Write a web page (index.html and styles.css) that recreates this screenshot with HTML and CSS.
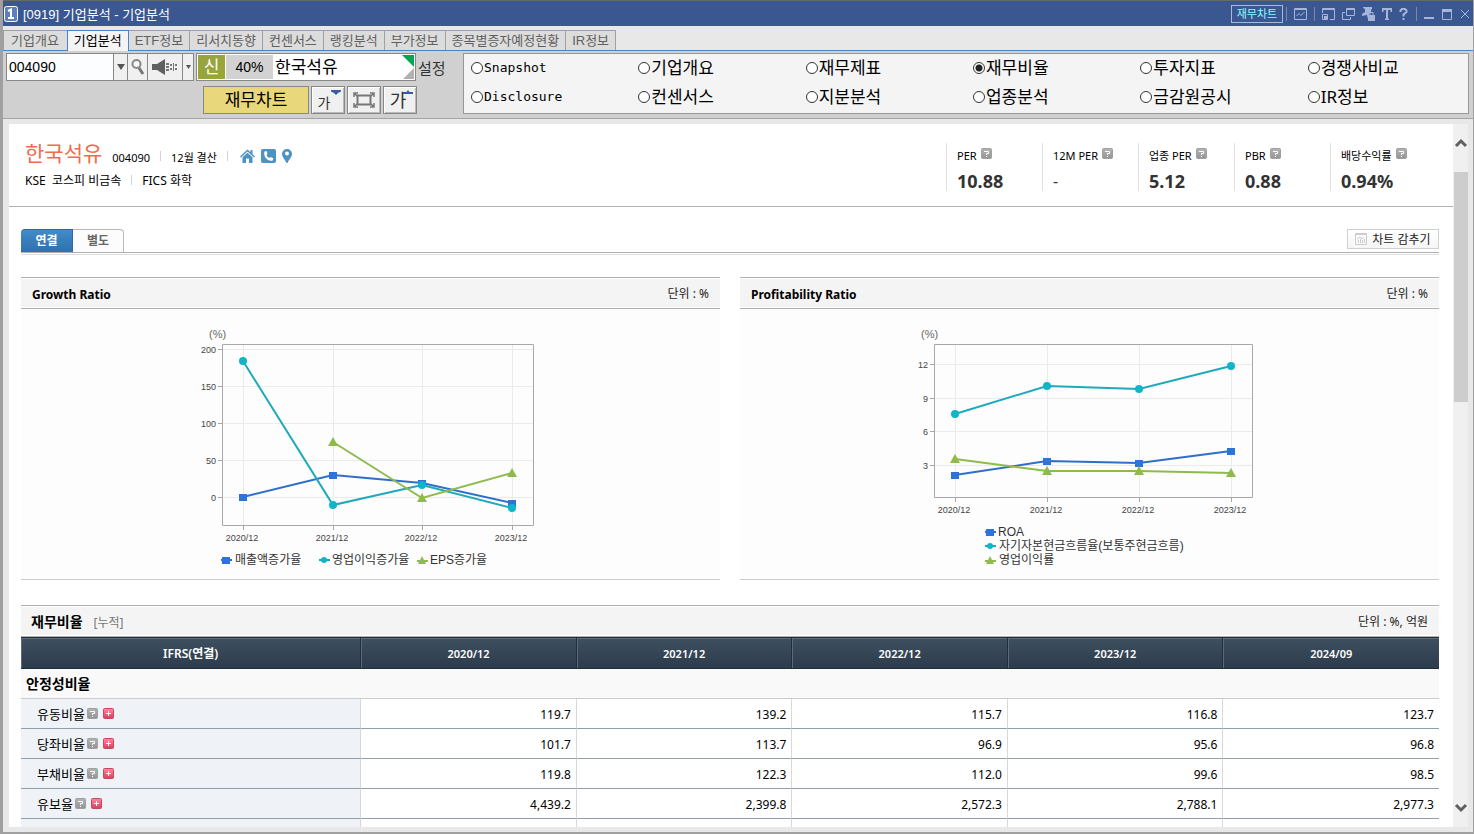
FILE: index.html
```html
<!DOCTYPE html>
<html lang="ko">
<head>
<meta charset="utf-8">
<title>[0919] 기업분석</title>
<link rel="stylesheet" href="styles.css">
</head>
<body>
<svg class="defs" width="0" height="0" aria-hidden="true">
  <defs>
    <linearGradient id="grayGrad" x1="0" y1="0" x2="0" y2="1"><stop offset="0" stop-color="#b4b4b4"/><stop offset="1" stop-color="#949494"/></linearGradient>
    <linearGradient id="redGrad" x1="0" y1="0" x2="0" y2="1"><stop offset="0" stop-color="#ff8a9e"/><stop offset="1" stop-color="#dc3c5c"/></linearGradient>
    <symbol id="help" viewBox="0 0 11 11"><rect x="0.5" y="0.5" width="10" height="10" rx="1" fill="url(#grayGrad)" stroke="#a0a0a0"/><path d="M3 3.500H7.500V5.500H5.500V7M5.500 8V9" fill="none" stroke="#fff"/></symbol>
    <symbol id="plus" viewBox="0 0 11 11"><rect x="0.5" y="0.5" width="10" height="10" rx="1" fill="url(#redGrad)" stroke="#c84860"/><path d="M3 5.5H8M5.5 3V8" stroke="#fff"/></symbol>
    <g id="mSq"><rect x="-4" y="-3" width="8" height="7" fill="#2d74da"/></g>
    <g id="mDot"><circle r="4" fill="#0fb5c9"/></g>
    <g id="mTri"><path d="M0-5L5 4H-5Z" fill="#8fba4c"/></g>
    <g id="lSq"><path d="M-5 0H6" stroke="#2d6fca" stroke-width="2"/><rect x="-4" y="-3" width="8" height="7" fill="#2d74da"/></g>
    <g id="lDot"><path d="M-5 0H6" stroke="#1eaaba" stroke-width="2"/><circle r="3" fill="#0fb5c9"/></g>
    <g id="lTri"><path d="M-5 1H6" stroke="#8fba4c" stroke-width="2"/><path d="M0-4L4 4H-4Z" fill="#8fba4c"/></g>
  </defs>
</svg>

<div class="window">
  <header class="titlebar">
    <svg class="badge" viewBox="0 0 14 16"><rect x="0.5" y="0.5" width="13" height="15" rx="2" fill="#5f7ebc" stroke="#fff"/><path d="M4 5L7 3.5V12M4 12H10" fill="none" stroke="#fff" stroke-width="2"/></svg>
    <h1 class="title">[0919] 기업분석 - 기업분석</h1>
    <div class="titletools">
      <div class="quick"><button class="quickbtn">재무차트</button><i class="sep"></i></div>
      <button class="ti" aria-label="차트"><svg width="13" height="12" viewBox="0 0 13 12"><path d="M.5 .5H12.5V11.5H.5ZM.5 1.5H12.5"/><path d="M2.5 8L5 5.5L7 7.5L10.5 4"/></svg></button>
      <i class="sep"></i>
      <button class="ti" aria-label="크기"><svg width="13" height="12" viewBox="0 0 13 12"><path d="M.5 5V.5H12.5V11.5H8M.5 1.5H12.5M.5 6.5H5.5V11.5H.5Z"/><path class="f" d="M2 8H5V11H2Z"/></svg></button>
      <button class="ti" aria-label="복제"><svg width="13" height="12" viewBox="0 0 13 12"><path d="M4.5 .5H12.5V7.5H4.5ZM4.5 1.5H12.5M3 4.5H.5V11.5H8.5V9"/></svg></button>
      <button class="ti" aria-label="고정"><svg width="13" height="14" viewBox="0 0 13 14"><path class="f" d="M1 0H10V2L9 3V5L7 7L6 12L5 8L0 9V7L3 5V2L1 1ZM6 8H13V14H6Z"/><path d="M8 8V5.5H11V8"/></svg></button>
      <button class="ti" aria-label="글꼴"><svg width="10" height="12" viewBox="0 0 10 12"><path d="M0 1H10M5 1V11M.5 0V4M9.5 0V4M3 11.5H7" stroke-width="2"/></svg></button>
      <button class="ti" aria-label="도움말"><svg width="10" height="12" viewBox="0 0 10 12"><path d="M1.5 4V2.5L3 1H6L7.5 2.5V4L4.5 6.5V8.5M4.5 10V12" stroke-width="2"/></svg></button>
      <i class="sep"></i>
      <button class="ti" aria-label="최소화"><svg width="10" height="12" viewBox="0 0 10 12"><path d="M0 10H10" stroke-width="2"/></svg></button>
      <button class="ti" aria-label="최대화"><svg width="12" height="12" viewBox="0 0 12 12"><path d="M1.5 2V11.5H10.5V2"/><path d="M1 2.5H11" stroke-width="3"/></svg></button>
      <button class="ti" aria-label="닫기"><svg width="10" height="12" viewBox="0 0 10 12"><path d="M1 2L9 10M9 2L1 10"/></svg></button>
    </div>
  </header>

  <nav class="tabs">
    <a href="#" class="tab">기업개요</a><a href="#" class="tab on">기업분석</a><a href="#" class="tab">ETF정보</a><a href="#" class="tab">리서치동향</a><a href="#" class="tab">컨센서스</a><a href="#" class="tab">랭킹분석</a><a href="#" class="tab">부가정보</a><a href="#" class="tab">종목별증자예정현황</a><a href="#" class="tab">IR정보</a>
  </nav>

  <section class="toolbar">
    <div class="tools">
      <div class="toolrow">
        <div class="combo">
          <input class="code" value="004090" aria-label="종목코드">
          <button class="cell drop" aria-label="목록"><svg width="8" height="6" viewBox="0 0 8 6"><path d="M0 0H8L4 6Z" fill="#555"/></svg></button>
          <button class="cell find" aria-label="검색"><svg width="14" height="18" viewBox="0 0 14 18"><circle cx="5.5" cy="6" r="4" fill="#f8f8f8" stroke="#888" stroke-width="2"/><path d="M8 10L12 16" stroke="#777" stroke-width="3"/></svg></button>
          <button class="cell sound" aria-label="소리"><svg width="26" height="16" viewBox="0 0 26 16"><path d="M0 5H5L13 0V16L5 11H0Z" fill="#606060"/><path d="M14 4H17V6H14ZM14 7H17V9H14ZM14 10H17V12H14ZM18 5H20V7H18ZM18 9H20V11H18ZM21 4H22V12H21ZM23 5H25V7H23ZM23 9H25V11H23Z" fill="#777"/></svg></button>
          <button class="cell mini" aria-label="소리 옵션"><svg width="5" height="4" viewBox="0 0 5 4"><path d="M0 0H5L2.5 4Z" fill="#555"/></svg></button>
        </div>
        <div class="stock">
          <span class="credit">신</span><span class="rate">40%</span><span class="stockname">한국석유</span>
          <svg class="corner" viewBox="0 0 12 24"><path d="M0 0H12V12Z" fill="#00a850"/><path d="M12 13V24H1Z" fill="#b4b0b0"/></svg>
        </div>
        <a href="#" class="setting">설정</a>
      </div>
      <div class="toolrow second">
        <button class="yellow">재무차트</button>
        <button class="sizebtn" aria-label="글자 작게"><span class="ga small">가</span><svg class="mark" viewBox="0 0 10 5"><path d="M0 0H10V1.500L7 3L5 5L3 3L0 1.500Z" fill="#3a5aa4"/></svg></button>
        <button class="sizebtn" aria-label="화면 맞춤"><svg width="22" height="16" viewBox="0 0 22 16" fill="none" stroke="#777"><rect x="4.500" y="3.500" width="13" height="9" stroke-width="2"/><path d="M1 5V1H5M1 1L4 4M17 1H21V5M21 1L18 4M1 11V15H5M1 15L4 12M17 15H21V11M21 15L18 12" stroke-width="1.500"/></svg></button>
        <button class="sizebtn" aria-label="글자 크게"><span class="ga">가</span><svg class="mark" viewBox="0 0 10 5"><path d="M5 0L6.500 2H10V4H0V2H3.500Z" fill="#3a5aa4"/></svg></button>
      </div>
    </div>
    <form class="radios">
      <label class="opt latin"><input type="radio" name="v">Snapshot</label>
      <label class="opt"><input type="radio" name="v">기업개요</label>
      <label class="opt"><input type="radio" name="v">재무제표</label>
      <label class="opt"><input type="radio" name="v" checked>재무비율</label>
      <label class="opt"><input type="radio" name="v">투자지표</label>
      <label class="opt"><input type="radio" name="v">경쟁사비교</label>
      <label class="opt latin"><input type="radio" name="v">Disclosure</label>
      <label class="opt"><input type="radio" name="v">컨센서스</label>
      <label class="opt"><input type="radio" name="v">지분분석</label>
      <label class="opt"><input type="radio" name="v">업종분석</label>
      <label class="opt"><input type="radio" name="v">금감원공시</label>
      <label class="opt"><input type="radio" name="v">IR정보</label>
    </form>
  </section>

  <div class="viewport">
    <main class="page">
      <section class="summary">
        <div class="ident">
          <div class="line1">
            <h2 class="corp">한국석유</h2><span class="ticker">004090</span><i class="bar"></i><span>12월 결산</span><i class="bar"></i>
            <a href="#" class="ic" aria-label="홈페이지"><svg width="15" height="14" viewBox="0 0 15 14"><path d="M0 7.500L7.500 0.500L10.500 3.300V1H12.500V5.200L15 7.500L14 8.500L7.500 2.500L1 8.500Z" fill="#4c92c2"/><path d="M2.500 8.300L7.500 3.700L12.500 8.300V14H9V9.500H6V14H2.500Z" fill="#4c92c2"/></svg></a>
            <a href="#" class="ic" aria-label="전화"><svg width="15" height="14" viewBox="0 0 15 14"><rect width="15" height="14" rx="2" fill="#4c92c2"/><path d="M3.500 2.500L5.500 2L6.500 5L5.500 6C6 7.300 7.200 8.400 8.500 9L9.500 8L12.300 9.300L11.700 11.500C7 13 2 8 3.500 2.500Z" fill="#fff"/></svg></a>
            <a href="#" class="ic" aria-label="위치"><svg width="10" height="14" viewBox="0 0 10 14"><path d="M5 0A5 5 0 0 1 10 5C10 8 6.500 11 5.500 14H4.500C3.500 11 0 8 0 5A5 5 0 0 1 5 0Z" fill="#4c92c2"/><circle cx="5" cy="4.500" r="2" fill="#fff"/></svg></a>
          </div>
          <div class="line2"><span>KSE&nbsp; 코스피 비금속</span><i class="bar"></i><span>FICS 화학</span></div>
        </div>
        <dl class="stats">
          <div class="stat"><dt>PER <svg class="q"><use href="#help"/></svg></dt><dd>10.88</dd></div>
          <div class="stat"><dt>12M PER <svg class="q"><use href="#help"/></svg></dt><dd class="none">-</dd></div>
          <div class="stat"><dt>업종 PER <svg class="q"><use href="#help"/></svg></dt><dd>5.12</dd></div>
          <div class="stat"><dt>PBR <svg class="q"><use href="#help"/></svg></dt><dd>0.88</dd></div>
          <div class="stat"><dt>배당수익률 <svg class="q"><use href="#help"/></svg></dt><dd>0.94%</dd></div>
        </dl>
      </section>

      <div class="body">
        <div class="subbar">
          <div class="subtabs"><button class="sub on">연결</button><button class="sub">별도</button></div>
          <button class="hide"><svg width="12" height="12" viewBox="0 0 12 12" fill="none" stroke="#ccc"><path d="M.5 .5H11.500V11.500H.5ZM.5 1.500H11.500M3.500 10V7M5.500 10V6M7.500 10V7M9.500 10V6M2 6L5 4L7 6L9 4"/></svg>차트 감추기</button>
        </div>

        <div class="charts">
          <article class="panel">
            <header class="phead"><h3>Growth Ratio</h3><span>단위 : %</span></header>
            <div class="plot">
              <svg width="419" height="270" viewBox="0 0 419 270">
                <path class="grid" d="M61 40.500H372M61 77.500H372M61 114.500H372M61 151.500H372M61 188.500H372M82.500 36V216M172.500 36V216M261.500 36V216M351.500 36V216"/>
                <path class="frame" d="M61.500 35.500H372.500V216.500H61.500ZM57 40.500H61M57 77.500H61M57 114.500H61M57 151.500H61M57 188.500H61M82.500 217V221M172.500 217V221M261.500 217V221M351.500 217V221"/>
                <g class="tick end"><text x="55" y="44">200</text><text x="55" y="81">150</text><text x="55" y="118">100</text><text x="55" y="155">50</text><text x="55" y="192">0</text></g>
                <g class="tick mid"><text x="81" y="232">2020/12</text><text x="171" y="232">2021/12</text><text x="260" y="232">2022/12</text><text x="350" y="232">2023/12</text></g>
                <text class="unit" x="48" y="29">(%)</text>
                <polyline class="s1" points="82,188 172,166 261,174 351,194"/><use href="#mSq" x="82" y="188"/><use href="#mSq" x="172" y="166"/><use href="#mSq" x="261" y="174"/><use href="#mSq" x="351" y="194"/>
                <polyline class="s2" points="82,52 172,196 261,176 351,199"/><use href="#mDot" x="82" y="52"/><use href="#mDot" x="172" y="196"/><use href="#mDot" x="261" y="176"/><use href="#mDot" x="351" y="199"/>
                <polyline class="s3" points="172,133 261,189 351,164"/><use href="#mTri" x="172" y="133"/><use href="#mTri" x="261" y="189"/><use href="#mTri" x="351" y="164"/>
                <g class="leg"><use href="#lSq" x="65" y="251"/><text x="74" y="255">매출액증가율</text><use href="#lDot" x="163" y="251"/><text x="171" y="255">영업이익증가율</text><use href="#lTri" x="261" y="251"/><text x="269" y="255">EPS증가율</text></g>
              </svg>
            </div>
          </article>
          <article class="panel">
            <header class="phead"><h3>Profitability Ratio</h3><span>단위 : %</span></header>
            <div class="plot">
              <svg width="419" height="270" viewBox="0 0 419 270">
                <path class="grid" d="M54 55.500H372M54 89.500H372M54 122.500H372M54 156.500H372M75.500 36V188M167.500 36V188M259.500 36V188M351.500 36V188"/>
                <path class="frame" d="M54.500 35.500H372.500V188.500H54.500ZM50 55.500H54M50 89.500H54M50 122.500H54M50 156.500H54M75.500 189V193M167.500 189V193M259.500 189V193M351.500 189V193"/>
                <g class="tick end"><text x="48" y="59">12</text><text x="48" y="93">9</text><text x="48" y="126">6</text><text x="48" y="160">3</text></g>
                <g class="tick mid"><text x="74" y="204">2020/12</text><text x="166" y="204">2021/12</text><text x="258" y="204">2022/12</text><text x="350" y="204">2023/12</text></g>
                <text class="unit" x="41" y="29">(%)</text>
                <polyline class="s1" points="75,166 167,152 259,154 351,142"/><use href="#mSq" x="75" y="166"/><use href="#mSq" x="167" y="152"/><use href="#mSq" x="259" y="154"/><use href="#mSq" x="351" y="142"/>
                <polyline class="s2" points="75,105 167,77 259,80 351,57"/><use href="#mDot" x="75" y="105"/><use href="#mDot" x="167" y="77"/><use href="#mDot" x="259" y="80"/><use href="#mDot" x="351" y="57"/>
                <polyline class="s3" points="75,150 167,162 259,162 351,164"/><use href="#mTri" x="75" y="150"/><use href="#mTri" x="167" y="162"/><use href="#mTri" x="259" y="162"/><use href="#mTri" x="351" y="164"/>
                <g class="leg"><use href="#lSq" x="110" y="223"/><text x="118" y="227">ROA</text><use href="#lDot" x="110" y="237"/><text x="119" y="241">자기자본현금흐름율(보통주현금흐름)</text><use href="#lTri" x="110" y="251"/><text x="119" y="255">영업이익률</text></g>
              </svg>
            </div>
          </article>
        </div>

        <section class="ratios">
          <header class="phead"><h3>재무비율<small>[누적]</small></h3><span>단위 : %, 억원</span></header>
          <table>
            <thead><tr><th class="first">IFRS(연결)</th><th>2020/12</th><th>2021/12</th><th>2022/12</th><th>2023/12</th><th>2024/09</th></tr></thead>
            <tbody>
              <tr class="cat"><th colspan="6">안정성비율</th></tr>
              <tr><th>유동비율<svg class="q"><use href="#help"/></svg><button class="exp" aria-label="펼치기"><svg class="q"><use href="#plus"/></svg></button></th><td>119.7</td><td>139.2</td><td>115.7</td><td>116.8</td><td>123.7</td></tr>
              <tr><th>당좌비율<svg class="q"><use href="#help"/></svg><button class="exp" aria-label="펼치기"><svg class="q"><use href="#plus"/></svg></button></th><td>101.7</td><td>113.7</td><td>96.9</td><td>95.6</td><td>96.8</td></tr>
              <tr><th>부채비율<svg class="q"><use href="#help"/></svg><button class="exp" aria-label="펼치기"><svg class="q"><use href="#plus"/></svg></button></th><td>119.8</td><td>122.3</td><td>112.0</td><td>99.6</td><td>98.5</td></tr>
              <tr><th>유보율<svg class="q"><use href="#help"/></svg><button class="exp" aria-label="펼치기"><svg class="q"><use href="#plus"/></svg></button></th><td>4,439.2</td><td>2,399.8</td><td>2,572.3</td><td>2,788.1</td><td>2,977.3</td></tr>
              <tr><th></th><td></td><td></td><td></td><td></td><td></td></tr>
            </tbody>
          </table>
        </section>
      </div>
    </main>
    <aside class="scroll">
      <button class="arrow" aria-label="위로"><svg width="14" height="10" viewBox="0 0 14 10"><path d="M2 8L7 3L12 8" fill="none" stroke="#606060" stroke-width="3"/></svg></button>
      <div class="track"><div class="thumb"></div></div>
      <button class="arrow" aria-label="아래로"><svg width="14" height="10" viewBox="0 0 14 10"><path d="M2 2L7 7L12 2" fill="none" stroke="#606060" stroke-width="3"/></svg></button>
    </aside>
  </div>
</div>
</body>
</html>
```

FILE: styles.css
```css
* { box-sizing: border-box; }
body { margin: 0; font-family: "Noto Sans", "Noto Sans CJK KR", sans-serif; font-size: 12px; color: #000; }
h1, h2, h3, dl, dd { margin: 0; font-weight: normal; }
a { color: inherit; text-decoration: none; }
button { padding: 0; border: 0; background: none; color: inherit; font: inherit; }
svg { display: block; flex: none; }
.defs { position: absolute; }

.window { height: 100vh; display: flex; flex-direction: column; background: #e8e8e8; border: solid #a0a0a0; border-width: 0 1px 2px 3px; overflow: hidden; }

/* title bar */
.titlebar { display: flex; align-items: center; height: 26px; margin-left: -3px; margin-right: -1px; padding: 0 4px; background: #3a5792; border-top: 1px solid #686868; flex: none; }
.badge { width: 14px; height: 16px; }
.title { margin-left: 5px; color: #fff; font: 13px "Liberation Sans", "Noto Sans CJK KR", sans-serif; }
.titletools { margin-left: auto; display: flex; align-items: center; gap: 7px; }
.quick { display: flex; align-items: center; gap: 3px; }
.quickbtn { width: 52px; height: 18px; border: 1px solid #a8bad8; color: #8ffcff; font-size: 11px; line-height: 14px; }
.sep { width: 1px; height: 14px; background: #8088a0; }
.ti svg { fill: none; stroke: #a6b6da; }
.ti .f { fill: #a6b6da; stroke: none; }

/* screen tabs */
.tabs { display: flex; height: 25px; padding: 4px 0 0; border-bottom: 1px solid #4a84c8; flex: none; font: 13px "Liberation Sans", "Noto Sans CJK KR", sans-serif; }
.tab { height: 20px; padding: 0 6px; line-height: 20px; white-space: nowrap; color: #606060; background: #dcdcdc; border: solid #a0a0a0; border-width: 1px 0 0 1px; }
.tab:first-child { padding: 0 8px 0 7px; }
.tab:last-child { border-right-width: 1px; }
.tab.on { height: 21px; color: #000; background: #f4f4f4; border: solid #4a84c8; border-width: 1px 1px 0; }
.tab.on + .tab { border-left: 0; }

/* tool bar */
.toolbar { display: flex; gap: 17px; height: 68px; padding: 2px 4px 4px 3px; background: #d0d0d0; border-bottom: 1px solid #a4a4a4; flex: none; }
.tools { width: 440px; flex: none; display: flex; flex-direction: column; gap: 5px; }
.toolrow { display: flex; height: 28px; align-items: stretch; }
.combo { display: flex; width: 188px; border: 1px solid #888; background: #888; gap: 1px; margin-right: 2px; }
.code { flex: 1; min-width: 0; border: 0; padding: 0 2px; font: 14px "Liberation Sans", sans-serif; background: #fcfdff; }
.cell { display: flex; align-items: center; justify-content: center; background: #f0f0f0; }
.drop { width: 13px; }
.find { width: 19px; }
.sound { width: 34px; }
.mini { width: 10px; }
.stock { position: relative; display: flex; align-items: stretch; width: 220px; padding: 1px; gap: 1px; background: #fff; border: 1px solid #888; line-height: 24px; font-size: 17px; }
.credit { width: 27px; background: #98a53c; color: #fff; text-align: center; }
.rate { width: 47px; background: #d2d2d2; text-align: center; font-family: "Liberation Sans", sans-serif; font-size: 14px; }
.stockname { padding-left: 1px; }
.corner { position: absolute; right: 1px; top: 1px; width: 12px; height: 24px; }
.setting { align-self: center; margin-left: 2px; font-size: 15px; color: #333; }
.second { padding-left: 197px; gap: 2px; }
.yellow { width: 106px; background: #e9d77c; border: 1px solid #888; font-size: 17px; line-height: 24px; }
.sizebtn { position: relative; width: 34px; display: flex; align-items: center; justify-content: center; background: #f0f0f0; border: 1px solid #888; box-shadow: inset 1px 1px #fff, inset -1px -1px #bbb; color: #333; }
.ga { font-size: 18px; line-height: 20px; padding-right: 4px; }
.small { font-size: 14px; padding: 6px 8px 0 0; }
.mark { position: absolute; right: 3px; top: 3px; width: 10px; height: 5px; }
.radios { flex: 1; margin: 0; display: grid; grid-template-columns: repeat(6, 1fr); grid-template-rows: 27px 31px; align-items: center; background: #f4f4f4; border: 1px solid #989898; }
.opt { display: flex; align-items: center; gap: 1px; padding-left: 7px; font-size: 17px; line-height: 20px; white-space: nowrap; }
.latin { font-family: "DejaVu Sans Mono", monospace; font-size: 13px; }
.opt input { appearance: none; width: 12px; height: 12px; margin: 0; border: 1px solid #333; border-radius: 50%; background: #fff; }
.opt input:checked { background: radial-gradient(circle, #222 0 3px, #fff 4px); }

/* scrolled page */
.viewport { flex: 1; min-height: 0; display: flex; padding: 5px 5px 5px 6px; }
.page { flex: 1; min-width: 0; background: #fff; overflow: hidden; }
.scroll { width: 15px; display: flex; flex-direction: column; background: #f0f0f0; padding-left: 1px; }
.arrow { height: 38px; display: flex; align-items: center; justify-content: center; }
.track { flex: 1; padding-top: 10px; }
.thumb { height: 230px; background: #cdcdcd; }

.summary { display: flex; justify-content: space-between; height: 83px; padding: 19px 27px 0 16px; border-bottom: 1px solid #b0b0b0; font-size: 11px; }
.line1, .line2 { display: flex; align-items: center; }
.line1 { height: 26px; }
.line2 { height: 22px; font-size: 12px; }
.corp { font-size: 21px; line-height: 24px; color: #f26a4c; align-self: flex-start; margin-top: -2px; }
.ticker { margin-left: 10px; }
.line1 > span { padding-top: 2px; }
.bar { width: 1px; height: 10px; margin: 0 10px; background: #ccd4dc; }
.ic { margin-right: 6px; }
.ic:first-of-type { margin-left: 2px; }
.stats { display: flex; height: 48px; }
.stat { width: 96px; padding-left: 10px; border-left: 1px solid #e0e0e0; }
.stat dt { display: flex; gap: 4px; line-height: 26px; white-space: nowrap; }
.stat .q { margin-top: 5px; }
.q { width: 11px; height: 11px; }
.stat dd { font-size: 18px; font-weight: bold; line-height: 24px; color: #333; }
.stat .none { font-size: 16px; font-weight: normal; }

.body { padding: 22px 14px 0 12px; }
.subbar { display: flex; justify-content: space-between; height: 26px; border-bottom: 1px solid #e0e0e0; background: linear-gradient(#b0b0b0, #b0b0b0) 0 23px / 100% 1px no-repeat; }
.subtabs { display: flex; height: 23px; }
.sub { width: 51px; border: 1px solid #b8b8b8; border-width: 1px 1px 0 0; border-radius: 0 4px 0 0; background: #fcfcfc; color: #666; font-weight: bold; line-height: 20px; }
.sub.on { width: 52px; border-color: #2a6aa8; border-radius: 4px 0 0 0; background: linear-gradient(#428bca, #3070ac); color: #fff; }
.hide { display: flex; align-items: center; justify-content: center; gap: 5px; width: 92px; height: 20px; border: 1px solid #d0d0d0; background: linear-gradient(#fff, #f6f6f6); font-size: 12px; color: #222; }

.charts { display: grid; grid-template-columns: 1fr 1fr; gap: 20px; margin-top: 22px; }
.panel { background: #fdfdfd; border-bottom: 1px solid #ccc; }
.phead { display: flex; justify-content: space-between; align-items: center; height: 32px; padding: 0 11px; background: #f4f4f4; border: solid #b0b0b0; border-width: 1px 0; box-shadow: inset 0 1px #fff, inset 0 -1px #fff; color: #222; }
.phead h3 { font-size: 12px; font-weight: bold; color: #000; }
.panel h3 { padding-top: 2px; }
.plot { display: flex; justify-content: center; }
.grid { stroke: #ebebeb; fill: none; }
.frame { stroke: #a8a8a8; fill: none; }
.s1, .s2, .s3 { fill: none; stroke-width: 2; }
.s1 { stroke: #2d6fca; }
.s2 { stroke: #1eaaba; }
.s3 { stroke: #8fba4c; }
.tick { font: 9px "Liberation Sans", sans-serif; fill: #444; }
.end { text-anchor: end; }
.mid { text-anchor: middle; }
.unit { font: 11px "Liberation Sans", sans-serif; fill: #666; }
.leg { font: 12px "Liberation Sans", "Noto Sans CJK KR", sans-serif; fill: #333; }

.ratios { margin-top: 25px; }
.ratios .phead { padding-left: 10px; }
.ratios h3 { font-size: 14px; }
.ratios small { margin-left: 11px; font-size: 12px; font-weight: normal; color: #777; }
table { width: 100%; table-layout: fixed; border-collapse: separate; border-spacing: 0; }
thead th { height: 32px; padding: 0; color: #fff; font-size: 11px; font-weight: 600; background: linear-gradient(#3e4f60, #2c3c4c); border: solid #222e3a; border-width: 1px 1px 1px 0; box-shadow: inset 1px 1px #5c6b7a; }
thead .first { width: 24%; font-size: 12px; }
thead th:last-child { border-right: 0; }
tbody th, tbody td { height: 30px; padding: 0; border-bottom: 1px solid #8ea0aa; }
tbody th { padding-left: 16px; text-align: left; font-size: 13px; font-weight: normal; line-height: 20px; background: #eff3f8; border-right: 1px solid #d4d8dc; }
tbody td { padding: 2px 5px 0 0; text-align: right; border-right: 1px solid #d8d8d8; }
tbody td:last-child { border-right: 0; }
tbody .q { display: inline-block; margin-left: 2px; }
.exp .q { margin-left: 5px; }
.cat th { padding-left: 5px; font-size: 14px; font-weight: bold; background: #f9f9f9; border-right: 0; border-bottom-color: #ccc; }
```
